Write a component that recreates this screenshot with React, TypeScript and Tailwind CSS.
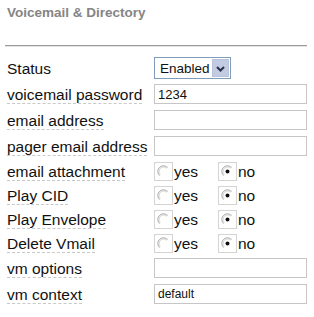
import type { JSX } from 'react'

function Radio({ checked }: { checked: boolean }): JSX.Element {
  return (
    <span className="flex h-[19px] w-[19px] items-center justify-center border border-[#d4d4d4] bg-white">
      <svg width="13" height="13" viewBox="0 0 13 13">
        <path d="M10.5 2.5 A5.6 5.6 0 0 0 2.5 10.5" fill="none" stroke="#a0a0a0" strokeWidth="1" />
        <path d="M9.6 3.4 A4.3 4.3 0 0 0 3.4 9.6" fill="none" stroke="#d8d8d8" strokeWidth="1" />
        {checked && <circle cx="6.5" cy="6.5" r="2" fill="#111" />}
      </svg>
    </span>
  )
}

function Label({ text, underline = true }: { text: string; underline?: boolean }): JSX.Element {
  return (
    <span className={underline ? 'border-b border-dashed border-[#c8c8c8] leading-[17px]' : 'leading-[17px]'}>{text}</span>
  )
}

function TextRow({ label, value, small }: { label: string; value?: string; small?: boolean }): JSX.Element {
  return (
    <div className="flex h-[26px] items-center">
      <div className="w-[147px]">
        <Label text={label} />
      </div>
      <input
        readOnly
        value={value ?? ''}
        className={`h-[20px] w-[153px] border border-[#c6c6c6] bg-white px-[3px] text-[#111] outline-none ${small ? 'text-[12px]' : 'text-[13px]'}`}
      />
    </div>
  )
}

function RadioRow({ label }: { label: string }): JSX.Element {
  return (
    <div className="flex h-[24px] items-center">
      <div className="w-[147px]">
        <Label text={label} />
      </div>
      <span className="flex w-[64px] items-center">
        <Radio checked={false} />
        <span className="ml-[1px]">yes</span>
      </span>
      <span className="flex items-center">
        <Radio checked />
        <span className="ml-[1px]">no</span>
      </span>
    </div>
  )
}

export default function App(): JSX.Element {
  return (
    <div className="h-[317px] w-[314px] bg-white pl-[7px] text-[15.5px] text-[#111]" style={{ fontFamily: '"Liberation Sans", Arial, sans-serif' }}>
      <div className="pt-[3px] text-[13.5px] font-bold text-[#858585]">Voicemail &amp; Directory</div>
      <div className="ml-[-2px] mt-[22px] w-[302px] border-t border-b border-t-[#9a9a9a] border-b-[#e4e4e4]" />
      <div className="mt-[8px]">
        <div className="flex h-[26px] items-center">
          <div className="w-[147px]">
            <Label text="Status" underline={false} />
          </div>
          <span className="flex h-[22px] w-[77px] items-center border border-[#7f9db9] bg-white">
            <span className="flex-1 pl-[5px] text-[13.5px] leading-none">Enabled</span>
            <span className="mr-[1px] flex h-[18px] w-[17px] items-center justify-center border border-[#b8c2da] bg-[#c3cbe2]">
              <svg width="9" height="7" viewBox="0 0 9 7">
                <path d="M1 2 L4.5 5.5 L8 2" fill="none" stroke="#27304d" strokeWidth="2" />
              </svg>
            </span>
          </span>
        </div>
        <TextRow label="voicemail password" value="1234" />
        <TextRow label="email address" />
        <TextRow label="pager email address" />
        <RadioRow label="email attachment" />
        <RadioRow label="Play CID" />
        <RadioRow label="Play Envelope" />
        <RadioRow label="Delete Vmail" />
        <TextRow label="vm options" />
        <TextRow label="vm context" value="default" small />
      </div>
    </div>
  )
}
